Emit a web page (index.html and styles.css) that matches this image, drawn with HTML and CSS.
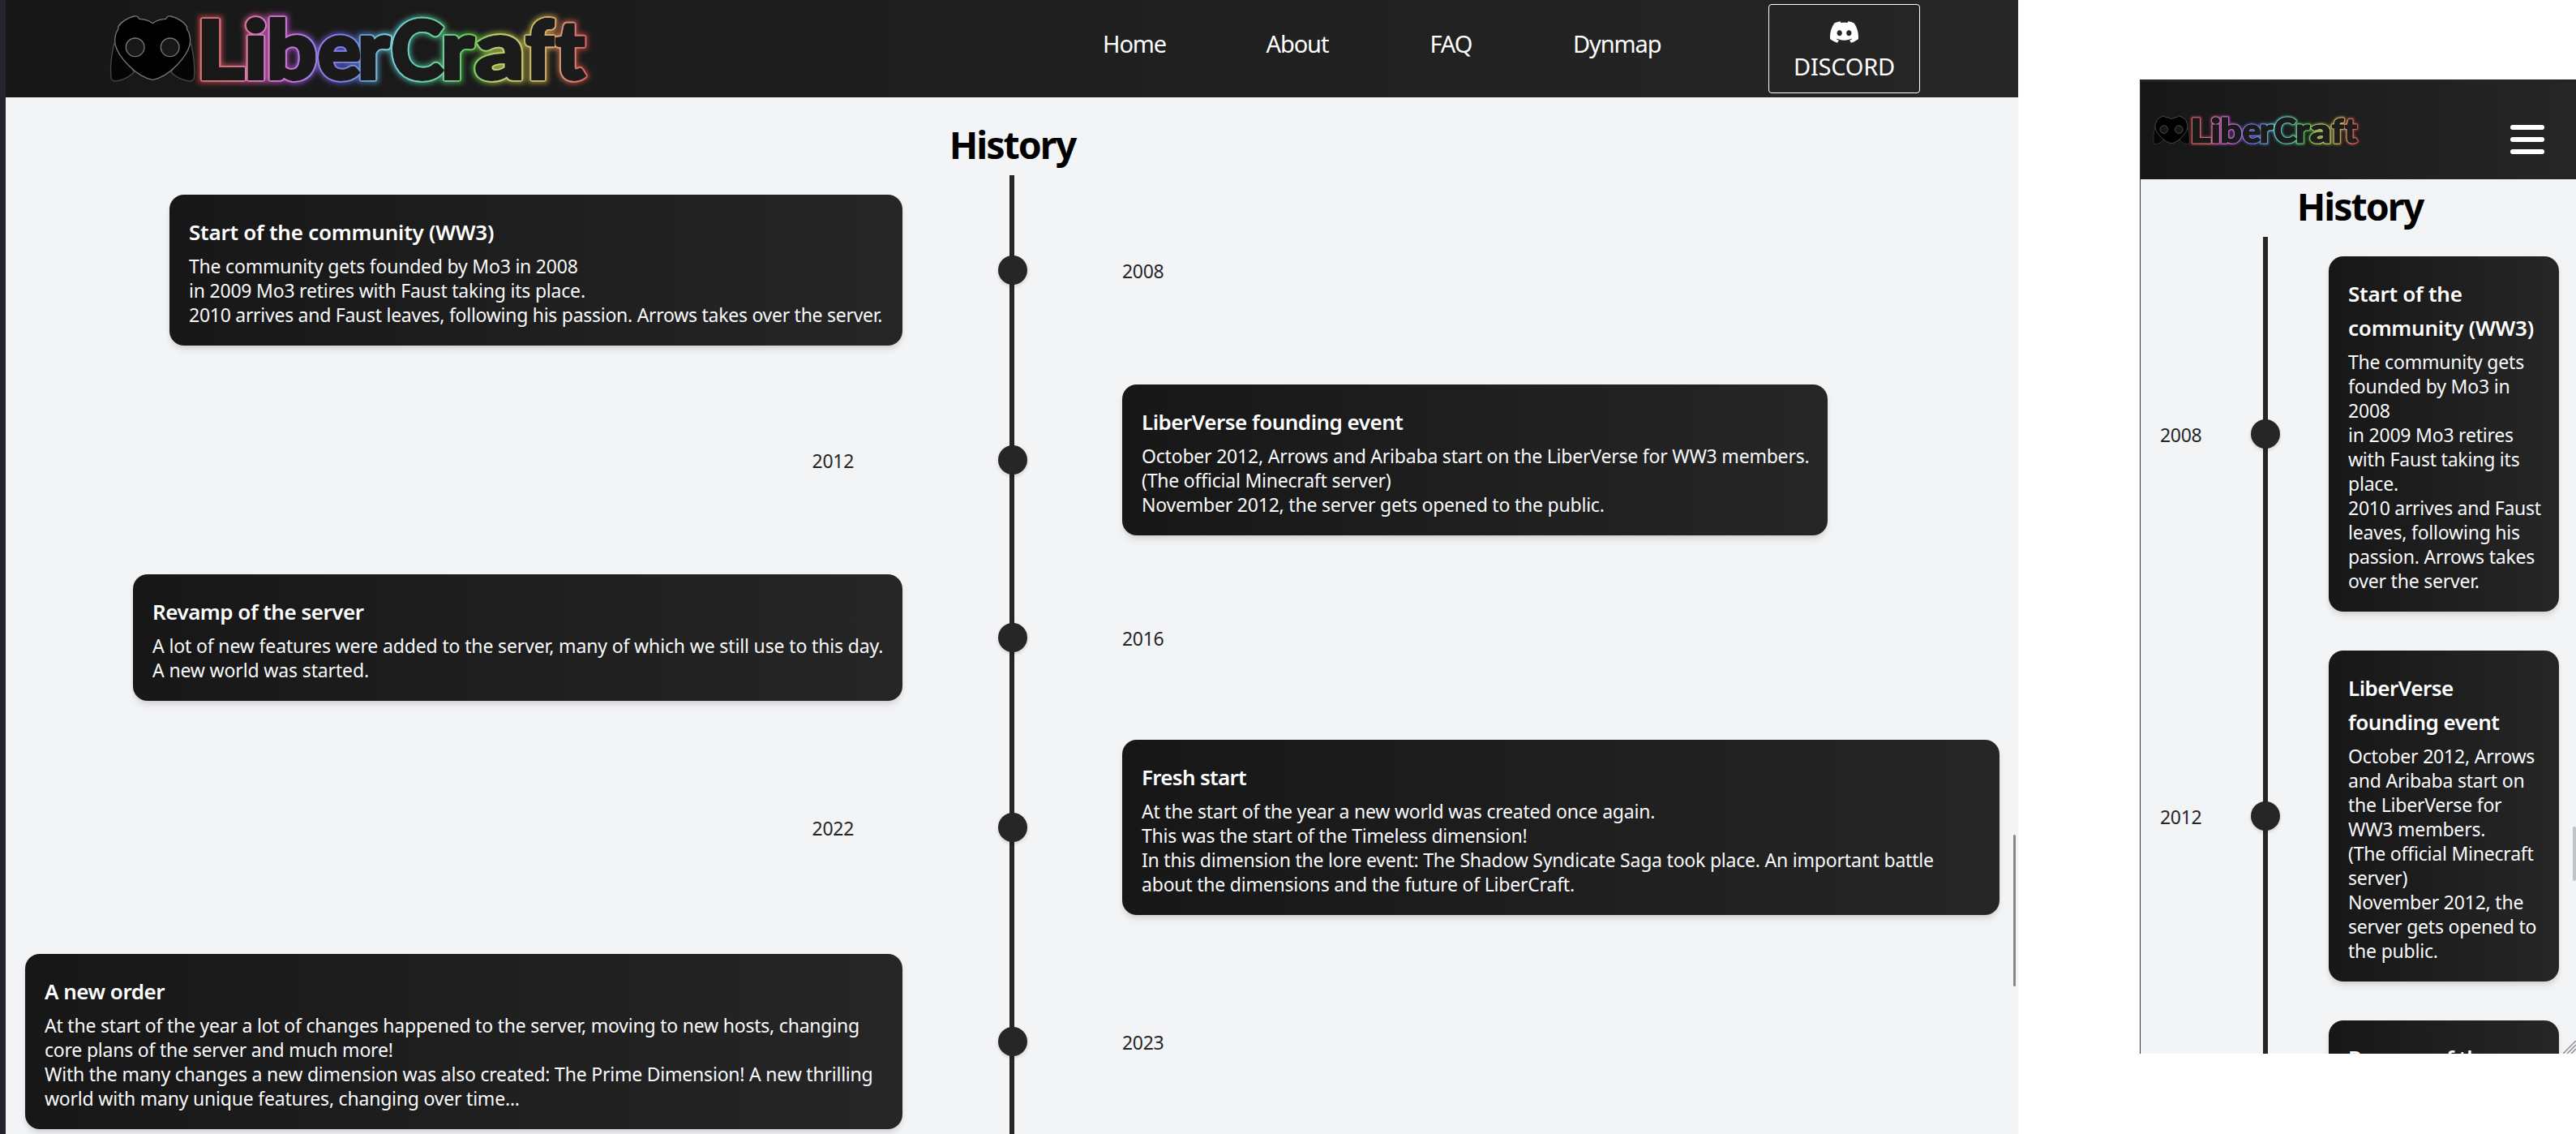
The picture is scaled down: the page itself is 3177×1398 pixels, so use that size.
FILE: index.html
```
<!DOCTYPE html>
<html lang="en">
<head>
<meta charset="utf-8">
<title>LiberCraft - History</title>
<link rel="stylesheet" href="styles.css">
</head>
<body>
<svg class="defs" aria-hidden="true">
  <defs>
    <linearGradient id="rainbow" gradientUnits="userSpaceOnUse" x1="240" y1="0" x2="730" y2="0">
      <stop offset="0" stop-color="#dc4a45"/><stop offset=".1" stop-color="#e0566f"/>
      <stop offset=".16" stop-color="#d556b0"/><stop offset=".24" stop-color="#c455dc"/>
      <stop offset=".3" stop-color="#8a63e6"/><stop offset=".37" stop-color="#5c5fe6"/>
      <stop offset=".43" stop-color="#4d86cc"/><stop offset=".49" stop-color="#5fd0e0"/>
      <stop offset=".56" stop-color="#45c8ac"/><stop offset=".64" stop-color="#55cf80"/>
      <stop offset=".69" stop-color="#45bf3a"/><stop offset=".76" stop-color="#b8cf50"/>
      <stop offset=".84" stop-color="#c2b848"/><stop offset=".9" stop-color="#e0a050"/>
      <stop offset=".95" stop-color="#dc5f55"/><stop offset="1" stop-color="#d03c34"/>
    </linearGradient>
    <filter id="soft" filterUnits="userSpaceOnUse" x="200" y="0" width="560" height="120"><feGaussianBlur stdDeviation="3.2"/></filter>
    <g id="letters" font-family="Lato, sans-serif" font-weight="900" font-size="99">
      <text transform="translate(242.4 96.5) scale(1.14 1)">L</text>
      <text transform="translate(301 96.5) scale(1.12 1)">i</text>
      <text transform="translate(328.4 96.5) scale(1.1 1)">b</text>
      <text transform="translate(392 96.5)">e</text>
      <text transform="translate(440.7 96.5) scale(1.06 1)">r</text>
      <text transform="translate(482.5 96.5) scale(.98 1)">C</text>
      <text transform="translate(544 96.5) scale(1.08 1)">r</text>
      <text transform="translate(586 96.5) scale(1.2 1)">a</text>
      <text transform="translate(648 96.5) scale(.97 1)">f</text>
      <text transform="translate(685 96.5) scale(.97 1)">t</text>
    </g>
    <mask id="neon" maskUnits="userSpaceOnUse" x="200" y="0" width="560" height="120">
      <use href="#letters" fill="none" stroke="#ddd" stroke-width="11" filter="url(#soft)"/>
      <use href="#letters" fill="#000" stroke="#000" stroke-width="4"/>
    </mask>
    <mask id="outline" maskUnits="userSpaceOnUse" x="200" y="0" width="560" height="120">
      <use href="#letters" fill="none" stroke="#fff" stroke-width="7.5" stroke-linejoin="round"/>
      <use href="#letters" fill="#000" stroke="#000" stroke-width="4"/>
    </mask>
    <symbol id="logo" viewBox="130 8 605 104">
      <g transform="translate(120 0) scale(.33333)" stroke="#787878" stroke-width="4" stroke-linejoin="round">
        <path fill="#050505" stroke="#484848" d="M62 162C52 205 47 250 51 288C52 298 62 301 74 299C96 296 118 284 136 268L90 180Z"/>
        <path fill="#050505" stroke="#484848" d="M347 162C357 205 362 250 358 288C357 298 347 301 335 299C313 296 291 284 273 268L319 180Z"/>
        <path fill="#000" fill-rule="evenodd" d="M205 86C193 77 177 71 155 70C152 62 147 58 137 60C112 65 86 83 78 98L77 108C67 123 63 142 66 163C76 209 143 284 205 295C266 284 333 209 343 163C346 142 342 123 332 108L331 98C323 83 297 65 272 60C262 58 257 62 254 70C232 71 217 77 205 86ZM174 175A34 34 0 1 1 106 175A34 34 0 1 1 174 175ZM303 175A34 34 0 1 1 235 175A34 34 0 1 1 303 175Z"/>
      </g>
      <rect x="200" width="560" height="120" fill="url(#rainbow)" mask="url(#neon)" opacity=".8"/>
      <rect x="200" width="560" height="120" fill="url(#rainbow)" mask="url(#outline)"/>
      <rect x="200" width="560" height="120" fill="#ccc" opacity=".3" mask="url(#outline)"/>
    </symbol>
  </defs>
</svg>

<main class="stage">
  <section class="desktop">
    <header class="topbar">
      <svg class="logo" role="img" aria-label="LiberCraft"><use href="#logo"/></svg>
      <nav class="nav">
        <a class="nav-link">Home</a>
        <a class="nav-link">About</a>
        <a class="nav-link">FAQ</a>
        <a class="nav-link">Dynmap</a>
        <a class="discord">
          <svg class="discord-icon" viewBox="0 0 127.14 96.36"><path fill="#fff" d="M107.7 8.07A105.15 105.15 0 0 0 81.47 0a72.06 72.06 0 0 0-3.36 6.83 97.68 97.68 0 0 0-29.11 0A72.37 72.37 0 0 0 45.64 0a105.89 105.89 0 0 0-26.25 8.09C2.79 32.65-1.71 56.6.54 80.21a105.73 105.73 0 0 0 32.17 16.15 77.7 77.7 0 0 0 6.89-11.11 68.42 68.42 0 0 1-10.85-5.18c.91-.66 1.8-1.34 2.66-2a75.57 75.57 0 0 0 64.32 0c.87.71 1.76 1.39 2.66 2a68.68 68.68 0 0 1-10.87 5.19 77 77 0 0 0 6.89 11.1 105.25 105.25 0 0 0 32.19-16.14c2.64-27.38-4.51-51.11-18.9-72.15ZM42.45 65.69C36.18 65.69 31 60 31 53s5-12.74 11.43-12.74S54 46 53.89 53s-5.05 12.69-11.44 12.69Zm42.24 0C78.41 65.69 73.25 60 73.25 53s5-12.74 11.44-12.74S96.23 46 96.12 53s-5.04 12.69-11.43 12.69Z"/></svg>
          <span>DISCORD</span>
        </a>
      </nav>
    </header>
    <h1 class="heading">History</h1>
    <ol class="timeline">
      <li class="event">
        <article class="card card--w1">
          <h2 class="title title--loose">Start of the community (WW3)</h2>
          <p class="text">The community gets founded by Mo3 in 2008<br>in 2009 Mo3 retires with Faust taking its place.<br><span class="snug">2010 arrives and Faust leaves, following his passion. Arrows takes over the server.</span></p>
        </article>
        <span class="dot"></span>
        <time class="year">2008</time>
      </li>
      <li class="event">
        <time class="year year--left">2012</time>
        <span class="dot"></span>
        <article class="card card--right card--w2">
          <h2 class="title">LiberVerse founding event</h2>
          <p class="text">October 2012, Arrows and Aribaba start on the LiberVerse for WW3 members.<br>(The official Minecraft server)<br>November 2012, the server gets opened to the public.</p>
        </article>
      </li>
      <li class="event">
        <article class="card card--w3">
          <h2 class="title">Revamp of the server</h2>
          <p class="text text--loose">A lot of new features were added to the server, many of which we still use to this day.<br>A new world was started.</p>
        </article>
        <span class="dot"></span>
        <time class="year">2016</time>
      </li>
      <li class="event">
        <time class="year year--left">2022</time>
        <span class="dot"></span>
        <article class="card card--right">
          <h2 class="title title--tight">Fresh start</h2>
          <p class="text">At the start of the year a new world was created once again.<br>This was the start of the Timeless dimension!<br>In this dimension the lore event: The Shadow Syndicate Saga took place. An important battle<br>about the dimensions and the future of LiberCraft.</p>
        </article>
      </li>
      <li class="event">
        <article class="card">
          <h2 class="title">A new order</h2>
          <p class="text">At the start of the year a lot of changes happened to the server, moving to new hosts, changing<br>core plans of the server and much more!<br>With the many changes a new dimension was also created: The Prime Dimension! A new thrilling<br>world with many unique features, changing over time...</p>
        </article>
        <span class="dot"></span>
        <time class="year">2023</time>
      </li>
    </ol>
    <span class="scroll-thumb"></span>
  </section>

  <section class="mobile">
    <header class="topbar topbar--mobile">
      <svg class="logo logo--small" role="img" aria-label="LiberCraft"><use href="#logo"/></svg>
      <button class="menu" aria-label="Menu"><span></span><span></span><span></span></button>
    </header>
    <h1 class="heading heading--mobile">History</h1>
    <ol class="timeline timeline--mobile">
      <li class="event event--mobile">
        <time class="year">2008</time>
        <span class="dot"></span>
        <article class="card">
          <h2 class="title title--loose">Start of the<br>community (WW3)</h2>
          <p class="text">The community gets<br>founded by Mo3 in<br>2008<br>in 2009 Mo3 retires<br>with Faust taking its<br>place.<br><span class="snug">2010 arrives and Faust</span><br>leaves, following his<br>passion. Arrows takes<br>over the server.</p>
        </article>
      </li>
      <li class="event event--mobile">
        <time class="year">2012</time>
        <span class="dot"></span>
        <article class="card">
          <h2 class="title">LiberVerse<br>founding event</h2>
          <p class="text">October 2012, Arrows<br>and Aribaba start on<br>the LiberVerse for<br>WW3 members.<br>(The official Minecraft<br>server)<br>November 2012, the<br>server gets opened to<br>the public.</p>
        </article>
      </li>
      <li class="event event--mobile event--cut">
        <article class="card">
          <h2 class="title">Revamp of the</h2>
        </article>
      </li>
    </ol>
    <span class="scroll-thumb scroll-thumb--mobile"></span>
    <svg class="grip" viewBox="0 0 16 16"><path d="M0 16L16 0M5 16L16 5M10 16L16 10" stroke="#8f9093" stroke-width="1.5" fill="none"/></svg>
  </section>
</main>
</body>
</html>
```
FILE: styles.css
```
* { box-sizing: border-box; margin: 0; padding: 0; }

body {
  height: 1398px;
  overflow: hidden;
  background: #fff;
  font-family: "Noto Sans", "Open Sans", sans-serif;
  font-size: 23px;
  line-height: 30px;
  color: #262626;
}

.defs { position: absolute; width: 0; height: 0; }

.stage {
  display: flex;
  align-items: flex-start;
  justify-content: space-between;
  height: 1398px;
}

.desktop {
  position: relative;
  width: 2489px;
  height: 1398px;
  overflow: hidden;
  background: #f3f4f6;
  border-left: 7px solid #25242e;
}

.topbar {
  display: flex;
  align-items: flex-start;
  justify-content: space-between;
  height: 120px;
  padding: 0 121px 0 123px;
  background: linear-gradient(to right, #171717, #262626);
}

.logo { width: 605px; height: 104px; margin-top: 8px; }

.nav {
  display: grid;
  grid-template-columns: 201.5px 202px 176.5px 241px 187px;
  color: #fff;
  font-size: 29px;
  line-height: 40px;
}

.nav-link { padding-top: 34px; letter-spacing: -1.1px; }

.discord {
  display: flex;
  flex-direction: column;
  align-items: center;
  gap: 9px;
  height: 110px;
  margin-top: 5px;
  padding-top: 20px;
  border: 1px solid #fff;
  border-radius: 4px;
  letter-spacing: -0.2px;
}

.discord-icon { display: block; width: 35px; height: 27px; }

.heading {
  padding: 25px 0 5px 1px;
  font-size: 46.5px;
  font-weight: 700;
  line-height: 66px;
  letter-spacing: -2px;
  text-align: center;
  color: #000;
}

.timeline {
  display: flex;
  flex-direction: column;
  gap: 48px;
  height: 1200px;
  padding: 24px 23px 0 24px;
  list-style: none;
  background: linear-gradient(#262626, #262626) 1238px 0 / 6px 100% no-repeat;
}

.event {
  display: grid;
  grid-template-columns: 1082px 36px 1082px;
  justify-content: space-between;
  align-items: center;
}

.card {
  justify-self: end;
  width: 100%;
  padding: 25px 24px 23px;
  border-radius: 18px;
  background: linear-gradient(to right, #171717, #262626);
  box-shadow: 0 6px 9px -1.5px rgba(0, 0, 0, 0.1), 0 3px 6px -3px rgba(0, 0, 0, 0.1);
  color: #f9fafb;
  white-space: nowrap;
}

.card--right { justify-self: start; }
.card--w1 { width: 904px; }
.card--w2 { width: 870px; }
.card--w3 { width: 949px; }

.title {
  margin-bottom: 6px;
  font-size: 26px;
  font-weight: 600;
  line-height: 42px;
  letter-spacing: -0.5px;
  color: #fff;
}

.title--loose { letter-spacing: -0.23px; }
.title--tight { letter-spacing: -0.7px; }

.text { letter-spacing: -0.21px; }
.text--loose { letter-spacing: -0.14px; }
.snug { letter-spacing: -0.27px; }

.dot {
  width: 36px;
  height: 36px;
  border-radius: 50%;
  background: #262626;
  box-shadow: 0 2px 4px rgba(0, 0, 0, 0.15);
}

.year { padding-top: 2px; letter-spacing: -0.3px; }
.year--left { padding-right: 60px; text-align: right; }

.scroll-thumb {
  position: absolute;
  top: 1029px;
  right: 3px;
  width: 3px;
  height: 187px;
  border-radius: 2px;
  background: #868789;
}

.mobile {
  position: relative;
  width: 538px;
  height: 1201px;
  margin-top: 98px;
  overflow: hidden;
  border-left: 1px solid #33333d;
  border-top: 3px solid #22222b;
  background: #f3f4f6;
}

.topbar--mobile { padding: 0 39px 0 13px; }

.logo--small { width: 260px; height: 44.7px; margin-top: 37px; }

.menu {
  display: flex;
  flex-direction: column;
  gap: 9px;
  margin-top: 53px;
  border: 0;
  background: none;
}

.menu span { width: 42px; height: 6px; border-radius: 3px; background: #fff; }

.heading--mobile { padding: 0 0 5px 4px; }

.timeline--mobile { padding: 24px 21px 0 24px; background-position: 151px 0; }

.event--mobile {
  grid-template-columns: 112px 96px 284px;
  justify-content: start;
}

.event--cut .card { grid-column: 3; height: 150px; }

.scroll-thumb--mobile { top: 918px; right: 0; width: 4px; height: 67px; background: #c2c3c5; }

.grip { position: absolute; right: 0; bottom: 0; width: 16px; height: 16px; }
```
